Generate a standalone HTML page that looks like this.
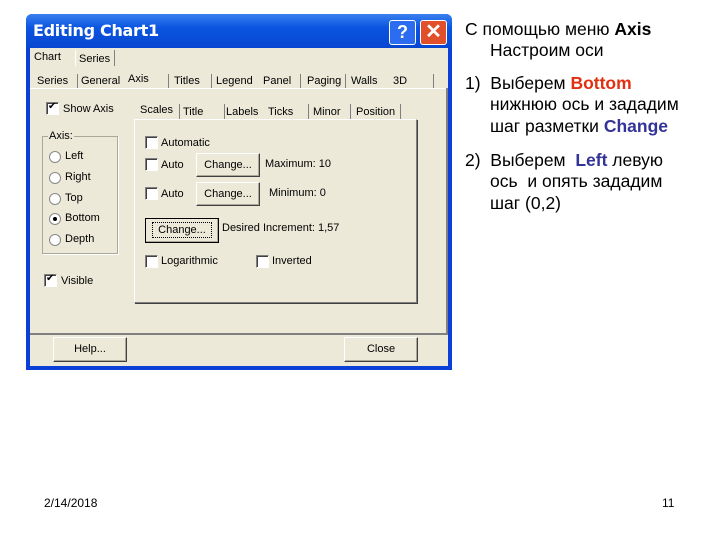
<!DOCTYPE html>
<html><head><meta charset="utf-8"><style>
*{margin:0;padding:0;box-sizing:border-box}
body{width:720px;height:540px;background:#fff;position:relative;overflow:hidden;font-family:"Liberation Sans",sans-serif}
.a{position:absolute}
.t{position:absolute;font-size:11px;color:#000;white-space:nowrap;line-height:13px}
.cb{position:absolute;width:13px;height:13px;background:#fff;border:1px solid;border-color:#808080 #fff #fff #808080;box-shadow:inset 1px 1px 0 #404040}
.rb{position:absolute;width:12px;height:12px;border-radius:50%;background:#fff;border:1px solid #888}
.btn{position:absolute;background:#ece9d8;border:1px solid;border-color:#fff #404040 #404040 #fff;box-shadow:inset -1px -1px 0 #aca899;font-size:11px;text-align:center}
.r{position:absolute;font-size:17.5px;line-height:21px;color:#000;white-space:nowrap}
</style></head><body>
<div class="a" style="left:26px;top:14px;width:426px;height:356px;background:#0a3fd8;border-radius:6px 6px 0 0"></div>
<div class="a" style="left:26px;top:14px;width:426px;height:34px;background:linear-gradient(#3a80f0,#0a55e0 40%,#0846d0);border-radius:6px 6px 0 0"></div>
<div class="a" style="left:33px;top:21px;font-size:16px;font-weight:bold;color:#fff;font-family:'DejaVu Sans',sans-serif;letter-spacing:-0.3px">Editing Chart1</div>
<div class="a" style="left:389px;top:20px;width:27px;height:25px;background:#2b6cf0;border:1px solid #fff;border-radius:3px;color:#fff;font-weight:bold;font-size:18px;text-align:center;line-height:23px">?</div>
<div class="a" style="left:420px;top:20px;width:27px;height:25px;background:#e0502a;border:1px solid #fff;border-radius:3px;color:#fff;font-weight:bold;font-size:20px;text-align:center;line-height:23px">✕</div>
<div class="a" style="left:30px;top:48px;width:418px;height:318px;background:#ece9d8"></div>
<div class="t" style="left:34px;top:51px">Chart</div>
<div class="a" style="left:75px;top:50px;width:40px;height:16px;border-left:1px solid #fff;border-right:1px solid #808080"></div>
<div class="t" style="left:79px;top:53px">Series</div>
<div class="a" style="left:30px;top:88px;width:418px;height:1px;background:#fff"></div>
<div class="t" style="left:37px;top:75px">Series</div>
<div class="t" style="left:81px;top:75px">General</div>
<div class="t" style="left:128px;top:73px">Axis</div>
<div class="t" style="left:174px;top:75px">Titles</div>
<div class="t" style="left:216px;top:75px">Legend</div>
<div class="t" style="left:263px;top:75px">Panel</div>
<div class="t" style="left:307px;top:75px">Paging</div>
<div class="t" style="left:351px;top:75px">Walls</div>
<div class="t" style="left:393px;top:75px">3D</div>
<div class="a" style="left:77px;top:74px;width:1px;height:14px;background:#808080"></div>
<div class="a" style="left:168px;top:74px;width:1px;height:14px;background:#808080"></div>
<div class="a" style="left:211px;top:74px;width:1px;height:14px;background:#808080"></div>
<div class="a" style="left:300px;top:74px;width:1px;height:14px;background:#808080"></div>
<div class="a" style="left:345px;top:74px;width:1px;height:14px;background:#808080"></div>
<div class="a" style="left:433px;top:74px;width:1px;height:14px;background:#808080"></div>
<div class="a" style="left:446px;top:88px;width:2px;height:246px;background:#808080"></div>
<div class="a" style="left:30px;top:333px;width:418px;height:2px;background:#808080"></div>
<div class="cb" style="left:46px;top:102px"></div><div class="t" style="left:48px;top:100px;font-size:10px">✔</div>
<div class="t" style="left:63px;top:103px">Show Axis</div>
<div class="a" style="left:42px;top:136px;width:76px;height:118px;border:1px solid #aca899;box-shadow:1px 1px 0 #fff"></div>
<div class="t" style="left:48px;top:130px;background:#ece9d8;padding:0 1px">Axis:</div>
<div class="rb" style="left:49px;top:151px"></div><div class="t" style="left:65px;top:150px">Left</div>
<div class="rb" style="left:49px;top:172px"></div><div class="t" style="left:65px;top:171px">Right</div>
<div class="rb" style="left:49px;top:193px"></div><div class="t" style="left:65px;top:192px">Top</div>
<div class="rb" style="left:49px;top:213px"></div><div class="a" style="left:53px;top:217px;width:4px;height:4px;background:#000;border-radius:50%"></div><div class="t" style="left:65px;top:212px">Bottom</div>
<div class="rb" style="left:49px;top:234px"></div><div class="t" style="left:65px;top:233px">Depth</div>
<div class="cb" style="left:44px;top:274px"></div><div class="t" style="left:46px;top:272px;font-size:10px">✔</div>
<div class="t" style="left:61px;top:275px">Visible</div>
<div class="t" style="left:140px;top:104px">Scales</div>
<div class="t" style="left:183px;top:106px">Title</div>
<div class="t" style="left:226px;top:106px">Labels</div>
<div class="t" style="left:268px;top:106px">Ticks</div>
<div class="t" style="left:313px;top:106px">Minor</div>
<div class="t" style="left:356px;top:106px">Position</div>
<div class="a" style="left:179px;top:104px;width:1px;height:15px;background:#808080"></div>
<div class="a" style="left:224px;top:104px;width:1px;height:15px;background:#808080"></div>
<div class="a" style="left:308px;top:104px;width:1px;height:15px;background:#808080"></div>
<div class="a" style="left:350px;top:104px;width:1px;height:15px;background:#808080"></div>
<div class="a" style="left:400px;top:104px;width:1px;height:15px;background:#808080"></div>
<div class="a" style="left:134px;top:119px;width:283px;height:184px;border:1px solid;border-color:#fff #808080 #808080 #fff;box-shadow:1px 1px 0 #404040"></div>
<div class="cb" style="left:145px;top:136px"></div><div class="t" style="left:161px;top:137px">Automatic</div>
<div class="cb" style="left:145px;top:158px"></div><div class="t" style="left:161px;top:159px">Auto</div>
<div class="btn" style="left:196px;top:153px;width:64px;height:24px;line-height:22px">Change...</div>
<div class="t" style="left:265px;top:158px">Maximum: 10</div>
<div class="cb" style="left:145px;top:187px"></div><div class="t" style="left:161px;top:188px">Auto</div>
<div class="btn" style="left:196px;top:182px;width:64px;height:24px;line-height:22px">Change...</div>
<div class="t" style="left:269px;top:187px">Minimum: 0</div>
<div class="btn" style="left:145px;top:218px;width:74px;height:25px;border-color:#000;line-height:22px"><span style="border:1px dotted #000;padding:1px 5px">Change...</span></div>
<div class="t" style="left:222px;top:222px">Desired Increment: 1,57</div>
<div class="cb" style="left:145px;top:255px"></div><div class="t" style="left:161px;top:255px">Logarithmic</div>
<div class="cb" style="left:256px;top:255px"></div><div class="t" style="left:272px;top:255px">Inverted</div>
<div class="btn" style="left:53px;top:337px;width:74px;height:25px;line-height:23px">Help...</div>
<div class="btn" style="left:344px;top:337px;width:74px;height:25px;line-height:23px">Close</div>
<div class="r" style="left:465px;top:19px">С помощью меню <b>Axis</b></div>
<div class="r" style="left:490px;top:40px">Настроим оси</div>
<div class="r" style="left:465px;top:73px">1)&nbsp; Выберем <b style="color:#e03010">Bottom</b></div>
<div class="r" style="left:490px;top:94px">нижнюю ось и зададим</div>
<div class="r" style="left:490px;top:116px">шаг разметки <b style="color:#333399">Change</b></div>
<div class="r" style="left:465px;top:150px">2)&nbsp; Выберем&nbsp; <b style="color:#333399">Left</b> левую</div>
<div class="r" style="left:490px;top:171px">ось&nbsp; и опять зададим</div>
<div class="r" style="left:490px;top:193px">шаг (0,2)</div>
<div class="a" style="left:44px;top:496px;font-size:12px">2/14/2018</div>
<div class="a" style="left:662px;top:496px;font-size:12px">11</div>
</body></html>
